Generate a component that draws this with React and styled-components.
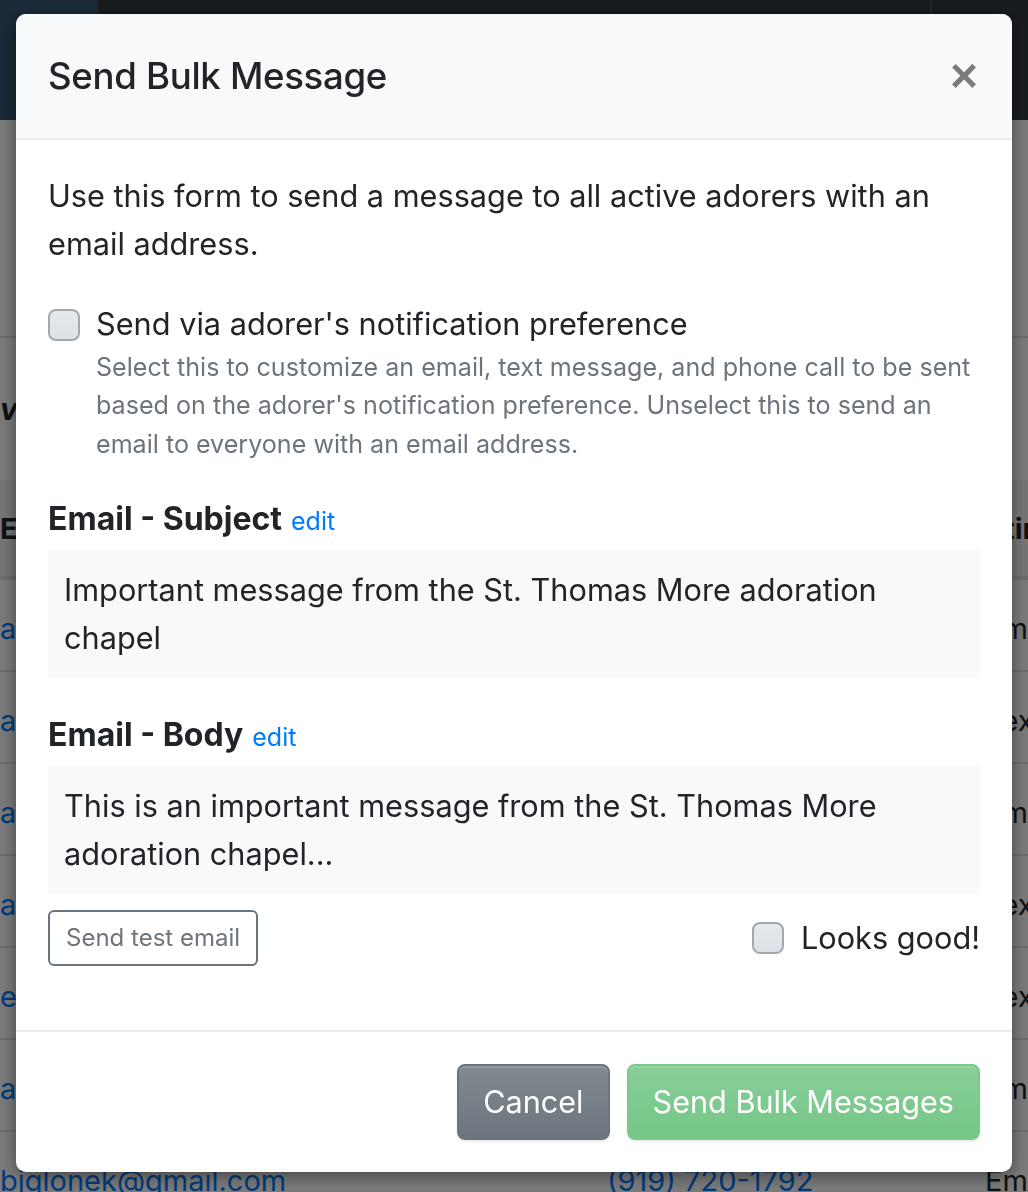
import React from "react";
import styled, { createGlobalStyle } from "styled-components";

const GlobalStyle = createGlobalStyle`
    html, body {
        margin: 0;
        padding: 0;
        background: #ffffff;
    }
    body {
        font-family: Inter, "Liberation Sans", Arial, sans-serif;
        color: #212529;
        overflow: hidden;
    }
    * {
        box-sizing: border-box;
    }
`;

/* ---------- page behind the modal ---------- */

const Page = styled.div`
    width: 1028px;
    height: 1192px;
    overflow: hidden;
    background: #ffffff;
`;

const Navbar = styled.div`
    height: 120px;
    display: flex;
    background: #343a40;
`;

const Brand = styled.div`
    width: 98px;
    background: #385675;
`;

const NavFill = styled.div`
    flex: 1;
`;

const NavRight = styled.div`
    width: 98px;
    border-left: 2px solid #4a5057;
`;

const Toolbar = styled.div`
    height: 218px;
    border-bottom: 2px solid #dee2e6;
`;

const FilterRow = styled.div`
    height: 142px;
    display: flex;
    align-items: center;
    font-size: 30px;
    font-weight: 700;
    font-style: italic;
`;

const Table = styled.div`
    display: grid;
    grid-template-columns: 607px 378px 1fr;
    font-size: 29px;
`;

const HeadCell = styled.div`
    height: 100px;
    display: flex;
    align-items: center;
    font-weight: 700;
    background: #f4f5f6;
    border-bottom: 4px solid #dee2e6;
    white-space: nowrap;
    overflow: hidden;
`;

const Cell = styled.div`
    height: 92px;
    display: flex;
    align-items: center;
    padding-top: 6px;
    border-bottom: 2px solid #dee2e6;
    white-space: nowrap;
    overflow: hidden;
    color: ${(props) => (props.link ? "#007bff" : "#212529")};
`;

/* ---------- modal ---------- */

const Backdrop = styled.div`
    position: fixed;
    inset: 0;
    background: rgba(0, 0, 0, 0.52);
`;

const ModalLayer = styled.div`
    position: fixed;
    inset: 0;
    padding: 14px 16px;
    display: flex;
    justify-content: center;
    align-items: flex-start;
`;

const ModalContainer = styled.div`
    width: 996px;
    background: #ffffff;
    border-radius: 10px;
    overflow: hidden;
    box-shadow: 0 4px 16px rgba(0, 0, 0, 0.45);
`;

const ModalHeader = styled.div`
    display: flex;
    align-items: center;
    justify-content: space-between;
    padding: 32px;
    background: #f8f9fa;
    border-bottom: 2px solid #e9ecef;
`;

const ModalTitle = styled.h5`
    margin: 0;
    font-size: 36.6px;
    font-weight: 500;
    line-height: 60px;
    color: #212529;
    letter-spacing: -0.3px;
`;

const CloseButton = styled.button`
    border: 0;
    background: transparent;
    padding: 0;
    margin-right: 2px;
    font-family: "Liberation Sans", Arial, sans-serif;
    font-size: 48px;
    font-weight: 700;
    line-height: 1;
    color: #000;
    opacity: 0.5;
    cursor: pointer;
`;

const ModalBody = styled.div`
    padding: 32px;
    font-size: 30.7px;
    line-height: 48px;
`;

const Intro = styled.p`
    margin: 0 0 32px;
`;

const FormGroup = styled.div`
    margin-bottom: 32px;
`;

const CheckRow = styled.label`
    display: flex;
    align-items: flex-start;
    gap: ${(props) => props.gap || 16}px;
    cursor: pointer;
`;

const CheckBox = styled.span`
    flex: none;
    width: 32px;
    height: 32px;
    margin-top: ${(props) => props.offset || 9}px;
    border: 2px solid #a3a8ad;
    border-radius: 8px;
    background: linear-gradient(180deg, #e6e9ec, #dde1e5);
`;

const CheckText = styled.div`
    display: flex;
    flex-direction: column;
`;

const HelpText = styled.small`
    font-size: 25.1px;
    line-height: 38.4px;
    color: #6c757d;
`;

const FieldLabel = styled.div`
    font-size: 32px;
    font-weight: 700;
    line-height: 48px;
    margin-bottom: 7px;
`;

const EditLink = styled.a`
    margin-left: 9px;
    font-size: 25px;
    font-weight: 400;
    line-height: 1;
    color: #007bff;
    text-decoration: none;
`;

const Preview = styled.div`
    padding: 16px;
    background: #f8f9fa;
    margin-bottom: ${(props) => props.gap || 0}px;
`;

const ActionRow = styled.div`
    display: flex;
    align-items: center;
    justify-content: space-between;
    margin-bottom: 32px;
`;

const SmallButton = styled.button`
    font-family: inherit;
    font-size: 24px;
    line-height: 36px;
    padding: 8px 16px;
    border: 2px solid #6c757d;
    border-radius: 6px;
    background: #ffffff;
    color: #6c757d;
`;

const ModalFooter = styled.div`
    display: flex;
    justify-content: flex-end;
    gap: 17px;
    padding: 32px;
    border-top: 2px solid #e9ecef;
`;

const FooterButton = styled.button`
    font-family: inherit;
    font-size: 30.6px;
    line-height: 48px;
    padding: 12px 24px;
    border: 2px solid ${(props) => props.edge};
    border-radius: 8px;
    color: #ffffff;
    background: ${(props) => props.fill};
    box-shadow: inset 0 2px 0 rgba(255, 255, 255, 0.15), 0 2px 2px rgba(0, 0, 0, 0.075);
`;

const rows = [
    ["alice.m@gmail.com", "(919) 555-0142", "Email"],
    ["anne.t@gmail.com", "(919) 555-0188", "Text"],
    ["andrew.p@gmail.com", "(919) 555-0117", "Email"],
    ["amy.k@gmail.com", "(919) 555-0163", "Text"],
    ["ellen.r@gmail.com", "(919) 555-0129", "Text"],
    ["arthur.w@gmail.com", "(919) 555-0190", "Email"],
    ["bjglonek@gmail.com", "(919) 720-1792", "Email"],
];

const App = () => {
    return (
        <>
            <GlobalStyle />
            <Page>
                <Navbar>
                    <Brand />
                    <NavFill />
                    <NavRight />
                </Navbar>
                <Toolbar />
                <FilterRow>v</FilterRow>
                <Table>
                    <HeadCell>Email</HeadCell>
                    <HeadCell>Phone</HeadCell>
                    <HeadCell>Rtime</HeadCell>
                    {rows.map((r) => (
                        <React.Fragment key={r[0]}>
                            <Cell link>{r[0]}</Cell>
                            <Cell link>{r[1]}</Cell>
                            <Cell>{r[2]}</Cell>
                        </React.Fragment>
                    ))}
                </Table>
            </Page>

            <Backdrop />
            <ModalLayer>
                <ModalContainer>
                    <ModalHeader>
                        <ModalTitle>Send Bulk Message</ModalTitle>
                        <CloseButton>×</CloseButton>
                    </ModalHeader>
                    <ModalBody>
                        <Intro>
                            Use this form to send a message to all active adorers with an email address.
                        </Intro>
                        <FormGroup>
                            <CheckRow>
                                <CheckBox />
                                <CheckText>
                                    <span>Send via adorer's notification preference</span>
                                    <HelpText>
                                        Select this to customize an email, text message, and phone call to be sent
                                        based on the adorer's notification preference. Unselect this to send an
                                        email to everyone with an email address.
                                    </HelpText>
                                </CheckText>
                            </CheckRow>
                        </FormGroup>
                        <FieldLabel>
                            Email - Subject<EditLink href="#">edit</EditLink>
                        </FieldLabel>
                        <Preview gap={33}>
                            Important message from the St. Thomas More adoration chapel
                        </Preview>
                        <FieldLabel>
                            Email - Body<EditLink href="#">edit</EditLink>
                        </FieldLabel>
                        <Preview gap={16}>
                            This is an important message from the St. Thomas More adoration chapel...
                        </Preview>
                        <ActionRow>
                            <SmallButton>Send test email</SmallButton>
                            <CheckRow gap={17}>
                                <CheckBox offset={8} />
                                <span>Looks good!</span>
                            </CheckRow>
                        </ActionRow>
                    </ModalBody>
                    <ModalFooter>
                        <FooterButton edge="#6c757d" fill="linear-gradient(180deg, #828a91, #6c757d)">
                            Cancel
                        </FooterButton>
                        <FooterButton
                            edge="#7ac98c"
                            fill="linear-gradient(180deg, #88ce98, #75c687)"
                        >
                            Send Bulk Messages
                        </FooterButton>
                    </ModalFooter>
                </ModalContainer>
            </ModalLayer>
        </>
    );
};

export default App;
